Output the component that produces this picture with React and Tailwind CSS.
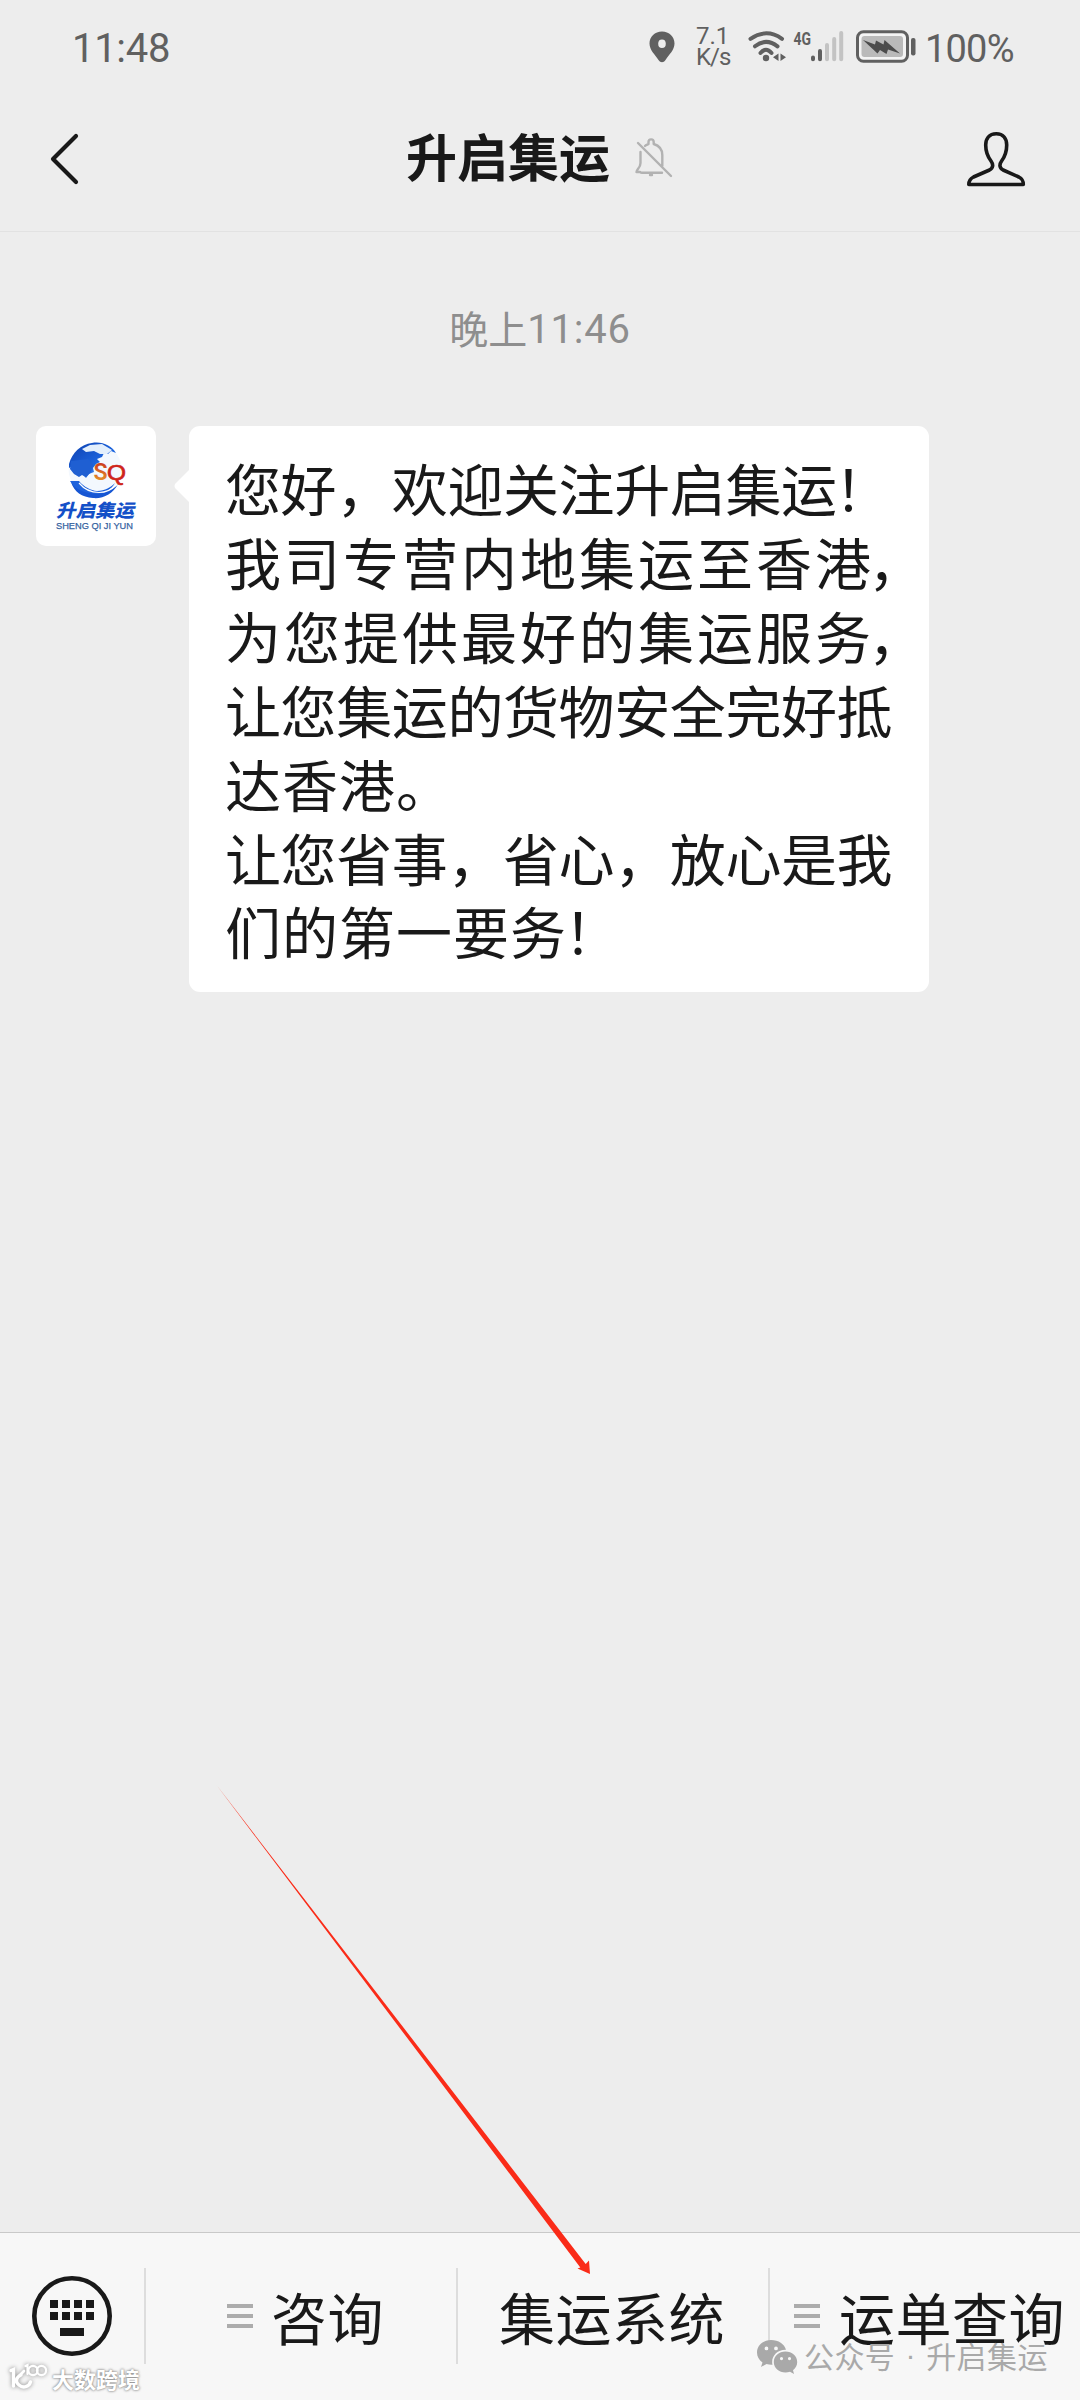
const cjk = "font-['Noto_Sans_CJK_SC',sans-serif]";

const lines = [
  { text: "您好，欢迎关注升启集运", end: "！", cls: "tracking-[-0.4px]", endCls: "-ml-[2px]" },
  { text: "我司专营内地集运至香港", end: "，", cls: "tracking-[3px]", endCls: "-ml-[6px]" },
  { text: "为您提供最好的集运服务", end: "，", cls: "tracking-[3px]", endCls: "-ml-[6px]" },
  { text: "让您集运的货物安全完好抵", end: "", cls: "tracking-[-0.4px]", endCls: "" },
  { text: "达香港。", end: "", cls: "tracking-[1px]", endCls: "" },
  { text: "让您省事，省心，放心是我", end: "", cls: "tracking-[-0.4px]", endCls: "" },
  { text: "们的第一要务", end: "！", cls: "tracking-[1px]", endCls: "-ml-[3px]" },
];

function StatusIcons() {
  return (
    <div className="flex h-[94px] items-center font-[Roboto,sans-serif] text-[#606060]">
      <svg className="h-8 w-[26px]" viewBox="0 0 26 32">
        <path
          fillRule="evenodd"
          fill="#606060"
          d="M13 0.500C5.800 0.500 0.500 5.800 0.500 12.500C0.500 19 6 23.500 9.500 29C11.500 32 14.500 32 16.500 29C20 23.500 25.500 19 25.500 12.500C25.500 5.800 20.200 0.500 13 0.500ZM13 8.500A3.800 4.300 0 1 1 13 17.100A3.800 4.300 0 1 1 13 8.500Z"
        />
      </svg>
      <div className="ml-[21px] w-[36px] whitespace-nowrap text-[24px] leading-[21px]">
        <div className="h-[21px]">7.1</div>
        <div className="h-[21px] tracking-[-1px]">K/s</div>
      </div>
      <svg className="ml-[15px] h-8 w-[100px]" viewBox="747 31 100 32" fill="none">
        <g stroke="#606060" strokeWidth="4" strokeLinecap="round">
          <path d="M750.500 38.800Q766.500 27.800 782 38.800" />
          <path d="M755 46.300Q766 37.500 777.500 46.300" />
          <path d="M760.500 53Q766 46.500 771.500 53" />
        </g>
        <circle cx="766" cy="58" r="3.200" fill="#606060" />
        <path d="M778.500 53.500V61L773 57.300ZM780.500 53.500V61L786 57.300Z" fill="#606060" />
        <text x="793.500" y="45.200" fontSize="19" fontWeight="700" textLength="17.500" lengthAdjust="spacingAndGlyphs" fill="#606060">4G</text>
        <g strokeWidth="4" strokeLinecap="round">
          <path d="M813 57.500V59.300M820 51V59.300" stroke="#606060" />
          <path d="M827 45V59.300M834.200 39V59.300M841.200 33V59.300" stroke="#c3c3c3" />
        </g>
      </svg>
      <svg className="ml-[8px] h-[34px] w-[62px]" viewBox="855 30 62 34">
        <rect x="857.500" y="31.800" width="50" height="29.500" rx="6" fill="#f4f4f4" stroke="#606060" strokeWidth="3" />
        <rect x="861.500" y="36" width="41.500" height="21" rx="3" fill="#bababa" />
        <path d="M863 40L875 44.500L876 40.500L883.500 44.500L884.500 40L900 53.500L888 49.500L886.500 54L880 50L877.500 53.500Z" fill="#4c4c4c" />
        <rect x="911" y="38" width="4.500" height="17.500" rx="2" fill="#606060" />
      </svg>
      <span className="ml-[8px] w-[88px] whitespace-nowrap pt-[3px] text-[38px] leading-none tracking-[-0.8px]">100%</span>
    </div>
  );
}

function Avatar() {
  return (
    <svg className="h-[120px] w-[120px] shrink-0 rounded-[10px] bg-white" viewBox="0 0 120 120">
      <defs>
        <linearGradient id="globe" x1="0" y1="0" x2="1" y2="1">
          <stop offset="0" stopColor="#0d3fae" />
          <stop offset="0.600" stopColor="#1d66e0" />
          <stop offset="1" stopColor="#8fbcf2" />
        </linearGradient>
        <linearGradient id="sGold" x1="0" y1="0" x2="0" y2="1">
          <stop offset="0" stopColor="#c5281c" />
          <stop offset="1" stopColor="#eba62c" />
        </linearGradient>
      </defs>
      <circle cx="59" cy="43" r="26.500" fill="#f3f8fe" />
      <path d="M33 38C36 27 45 18 56 17C66 15 76 20 80 27L75 25L72 28L68 27L66 31L61 33L64 36L60 38L57 42L58 46L53 48L50 52L46 48L44 44L40 43L38 39L33 42Z" fill="url(#globe)" />
      <path d="M46 23L54 19L66 18L76 24L71 28L64 28L58 25L50 26Z" fill="#e3effc" />
      <path d="M35 35L52 33L57 38L55 46L50 51L46 49L43 51L38 48L34 43Z" fill="#1f5fd2" />
      <path d="M35 56C41 60 48 65 58 67C67 68 76 64 82 58C77 68 67 73 57 72C46 71 38 66 35 56Z" fill="#1656d3" />
      <path d="M34 55H43C48 61 55 64.500 61 65C69 65 75 61 79 57C75 64 68 68 60 68C49 67 39 64 34 55Z" fill="#1f63dc" />
      <path d="M43 57C48 63 56 66.500 63 66.500C71 66.500 77 62.500 81 58.500" fill="none" stroke="#fff" strokeWidth="1.200" />
      <text x="57.500" y="53.500" fontFamily="Roboto, sans-serif" fontSize="23" fontWeight="600" fill="url(#sGold)">S</text>
      <text x="71" y="53.500" fontFamily="Liberation Sans, sans-serif" fontSize="22" fontWeight="500" textLength="19" lengthAdjust="spacingAndGlyphs" stroke="#cf241b" strokeWidth="0.700" fill="#cf241b">Q</text>
      <text transform="translate(20 91) skewX(-14)" fontFamily="Noto Sans CJK SC, sans-serif" fontSize="18" fontWeight="900" textLength="78" lengthAdjust="spacingAndGlyphs" fill="#1450c8">升启集运</text>
      <text x="20" y="103" fontFamily="Liberation Sans, sans-serif" fontSize="9.800" textLength="77" lengthAdjust="spacingAndGlyphs" stroke="#35629f" strokeWidth="0.250" fill="#35629f">SHENG QI JI YUN</text>
    </svg>
  );
}

function MenuLines() {
  return (
    <span className="flex w-[26px] flex-col gap-[6px]">
      <span className="h-1 bg-[#acacac]" />
      <span className="h-1 bg-[#acacac]" />
      <span className="h-1 bg-[#acacac]" />
    </span>
  );
}

export default function App() {
  return (
    <div className={`relative flex h-[2400px] w-[1080px] flex-col overflow-hidden bg-[#ededed] text-[#191919] ${cjk}`}>
      <header className="h-[232px] shrink-0 border-b border-[#e2e2e2]">
        <div className="flex h-[94px] items-center justify-between pl-[72px] pr-[67px]">
          <span className="pt-[3px] font-[Roboto,sans-serif] text-[40px] leading-none tracking-[-0.300px] text-[#606060]">11:48</span>
          <StatusIcons />
        </div>
        <div className="flex h-[130px] items-center">
          <svg className="ml-[48px] h-[56px] w-[34px]" viewBox="48 131 34 56" fill="none">
            <path d="M76 136L53 159L76 182" stroke="#191919" strokeWidth="4.200" strokeLinecap="round" strokeLinejoin="round" />
          </svg>
          <h1 className="ml-[324px] w-[206px] whitespace-nowrap pb-[8px] text-[51px] font-bold leading-none">升启集运</h1>
          <svg className="ml-[20px] mb-[4px] h-[42px] w-[42px]" viewBox="632 136 42 42" fill="none" stroke="#b2b2b2" strokeWidth="2.400" strokeLinecap="round" strokeLinejoin="round">
            <path d="M638 143L671 176M640.500 152V163C640.500 168 636.500 169.500 636.500 172H640C641 172.800 641 172.800 642 172.800H662M645 146C646 145 648 144.500 648.500 144V142A2.600 2.600 0 0 1 653.700 142V144C658.500 145.500 662.300 149 662.300 155V166" />
            <path d="M650 175H652" />
          </svg>
          <svg className="ml-[291px] h-[58px] w-[62px]" viewBox="965 130 62 58" fill="none">
            <path d="M996.300 133.700C989 133.700 985.700 139 985.700 145C985.700 153 988 157 991 161C993.500 164.500 993.300 168 989.500 170L973.500 177C969.500 179 968.800 181 968.800 184.500H1023.300C1023.300 181 1022.800 179 1018.800 177L1003.100 170C999.300 168 999.100 164.500 1001.600 161C1004.600 157 1006.700 153 1006.700 145C1006.700 139 1003.500 133.700 996.300 133.700Z" stroke="#191919" strokeWidth="3.600" strokeLinejoin="round" />
          </svg>
        </div>
      </header>

      <main className="flex-1">
        <div className="mt-[68px] flex h-[54px] items-center justify-center text-[39px] leading-[54px] text-[#8e8e8e]">
          <span>晚上</span>
          <span className="pt-[5px] font-[Roboto,sans-serif] text-[40px] tracking-[0.800px]">11:46</span>
        </div>
        <div className="mt-[72px] flex items-start pl-[36px]">
          <Avatar />
          <svg className="mt-[44px] ml-[18px] h-[32px] w-[15px]" viewBox="0 0 15 32">
            <path d="M15 0L1.500 13.500Q-0.500 16 1.500 18.500L15 32Z" fill="#fff" />
          </svg>
          <div className="h-[566px] w-[740px] rounded-[11px] bg-white pt-[24px] pl-[36px]">
            {lines.map((l) => (
              <p key={l.text} className={`whitespace-nowrap text-[56px] leading-[73.900px] ${l.cls}`}>
                {l.text}
                {l.end && <span className={l.endCls}>{l.end}</span>}
              </p>
            ))}
          </div>
        </div>
      </main>

      <footer className="flex h-[168px] shrink-0 border-t border-[#c9c9c9] bg-[#f7f7f7] pt-[35px] text-[56px] leading-[96px] tracking-[0.500px]">
        <div className="h-[96px] w-[146px] border-r-2 border-[#dddddd] pl-[32px] pt-[8px]">
          <svg className="h-[80px] w-[80px]" viewBox="0 0 80 80">
            <circle cx="40" cy="40" r="37.700" fill="none" stroke="#191919" strokeWidth="4.600" />
            <path d="M18 24h8v8h-8zM30 24h8v8h-8zM42 24h8v8h-8zM54 24h8v8h-8zM18 36h8v8h-8zM30 36h8v8h-8zM42 36h8v8h-8zM54 36h8v8h-8zM28 52h24v8h-24z" fill="#191919" />
          </svg>
        </div>
        <div className="flex h-[96px] w-[312px] items-center border-r-2 border-[#dddddd] pl-[81px]">
          <MenuLines />
          <span className="ml-[18px]">咨询</span>
        </div>
        <div className="flex h-[96px] w-[312px] items-center border-r-2 border-[#dddddd] pl-[41px]">
          <span>集运系统</span>
        </div>
        <div className="flex h-[96px] w-[310px] items-center pl-[24px]">
          <MenuLines />
          <span className="ml-[19px] whitespace-nowrap">运单查询</span>
        </div>
      </footer>

      {/* pointer arrow */}
      <svg className="absolute left-[210px] top-[1780px] h-[500px] w-[390px]" viewBox="210 1780 390 500">
        <path d="M216.500 1785L585.700 2264L589 2260.500L590 2274L577.500 2268.500L580.300 2267.500Z" fill="#fa2b18" />
      </svg>

      {/* account watermark */}
      <div className="absolute left-[756px] top-[2334px] flex items-center text-[#a9a9a9]">
        <svg className="mt-[2px] h-[36px] w-[42px]" viewBox="0 0 42 36">
          <path fillRule="evenodd" fill="#a9a9a9" d="M15 2C7 2 1 7.500 1 14.500C1 18.500 3 22 6.500 24.500L5 29L10.500 26C12.500 26.600 14.500 26.800 16.500 26.700C14.500 19 21 11.500 30 11.800C28.500 6 22.500 2 15 2ZM10.500 8.500A1.900 1.900 0 1 1 10.500 12.300A1.900 1.900 0 1 1 10.500 8.500ZM20 8.500A1.900 1.900 0 1 1 20 12.300A1.900 1.900 0 1 1 20 8.500Z" />
          <path fillRule="evenodd" fill="#a9a9a9" d="M29.500 13.500C23 13.500 17.800 18 17.800 24C17.800 30 23 34.500 29.500 34.500C31 34.500 32.500 34.200 34 33.800L38 36L37 32.200C39.700 30.200 41.200 27.300 41.200 24C41.200 18 36 13.500 29.500 13.500ZM25.500 19A1.600 1.600 0 1 1 25.500 22.200A1.600 1.600 0 1 1 25.500 19ZM33.500 19A1.600 1.600 0 1 1 33.500 22.200A1.600 1.600 0 1 1 33.500 19Z" />
        </svg>
        <span className="ml-[6px] flex whitespace-nowrap text-[30px] leading-[42px] tracking-[0.400px]">
          公众号
          <span className="w-[31px] text-center font-['Liberation_Sans',sans-serif]">·</span>
          升启集运
        </span>
      </div>

      {/* publisher watermark */}
      <div className="absolute left-[8px] top-[2361px] flex items-center text-white">
        <svg className="h-[32px] w-[42px] drop-shadow-[0_0_2px_#888]" viewBox="0 0 42 32" fill="none" stroke="#fff" strokeWidth="3.400" strokeLinecap="round">
          <path d="M3 8.500L5.500 7.500V24M13 13C8 15 7 20 11 23C15 26.500 21 25 22.500 20" />
          <path d="M12 13L16 9" strokeWidth="2.600" />
          <path d="M17.500 4L19.500 3V12" strokeWidth="2.200" />
          <circle cx="25" cy="8.500" r="4.600" strokeWidth="2.200" />
          <circle cx="33.500" cy="8.500" r="4.600" strokeWidth="2.200" />
        </svg>
        <span className="ml-[2px] whitespace-nowrap text-[22px] font-bold leading-[34px] [text-shadow:0_0_3px_#888,0_0_2px_#999]">大数跨境</span>
      </div>
    </div>
  );
}
